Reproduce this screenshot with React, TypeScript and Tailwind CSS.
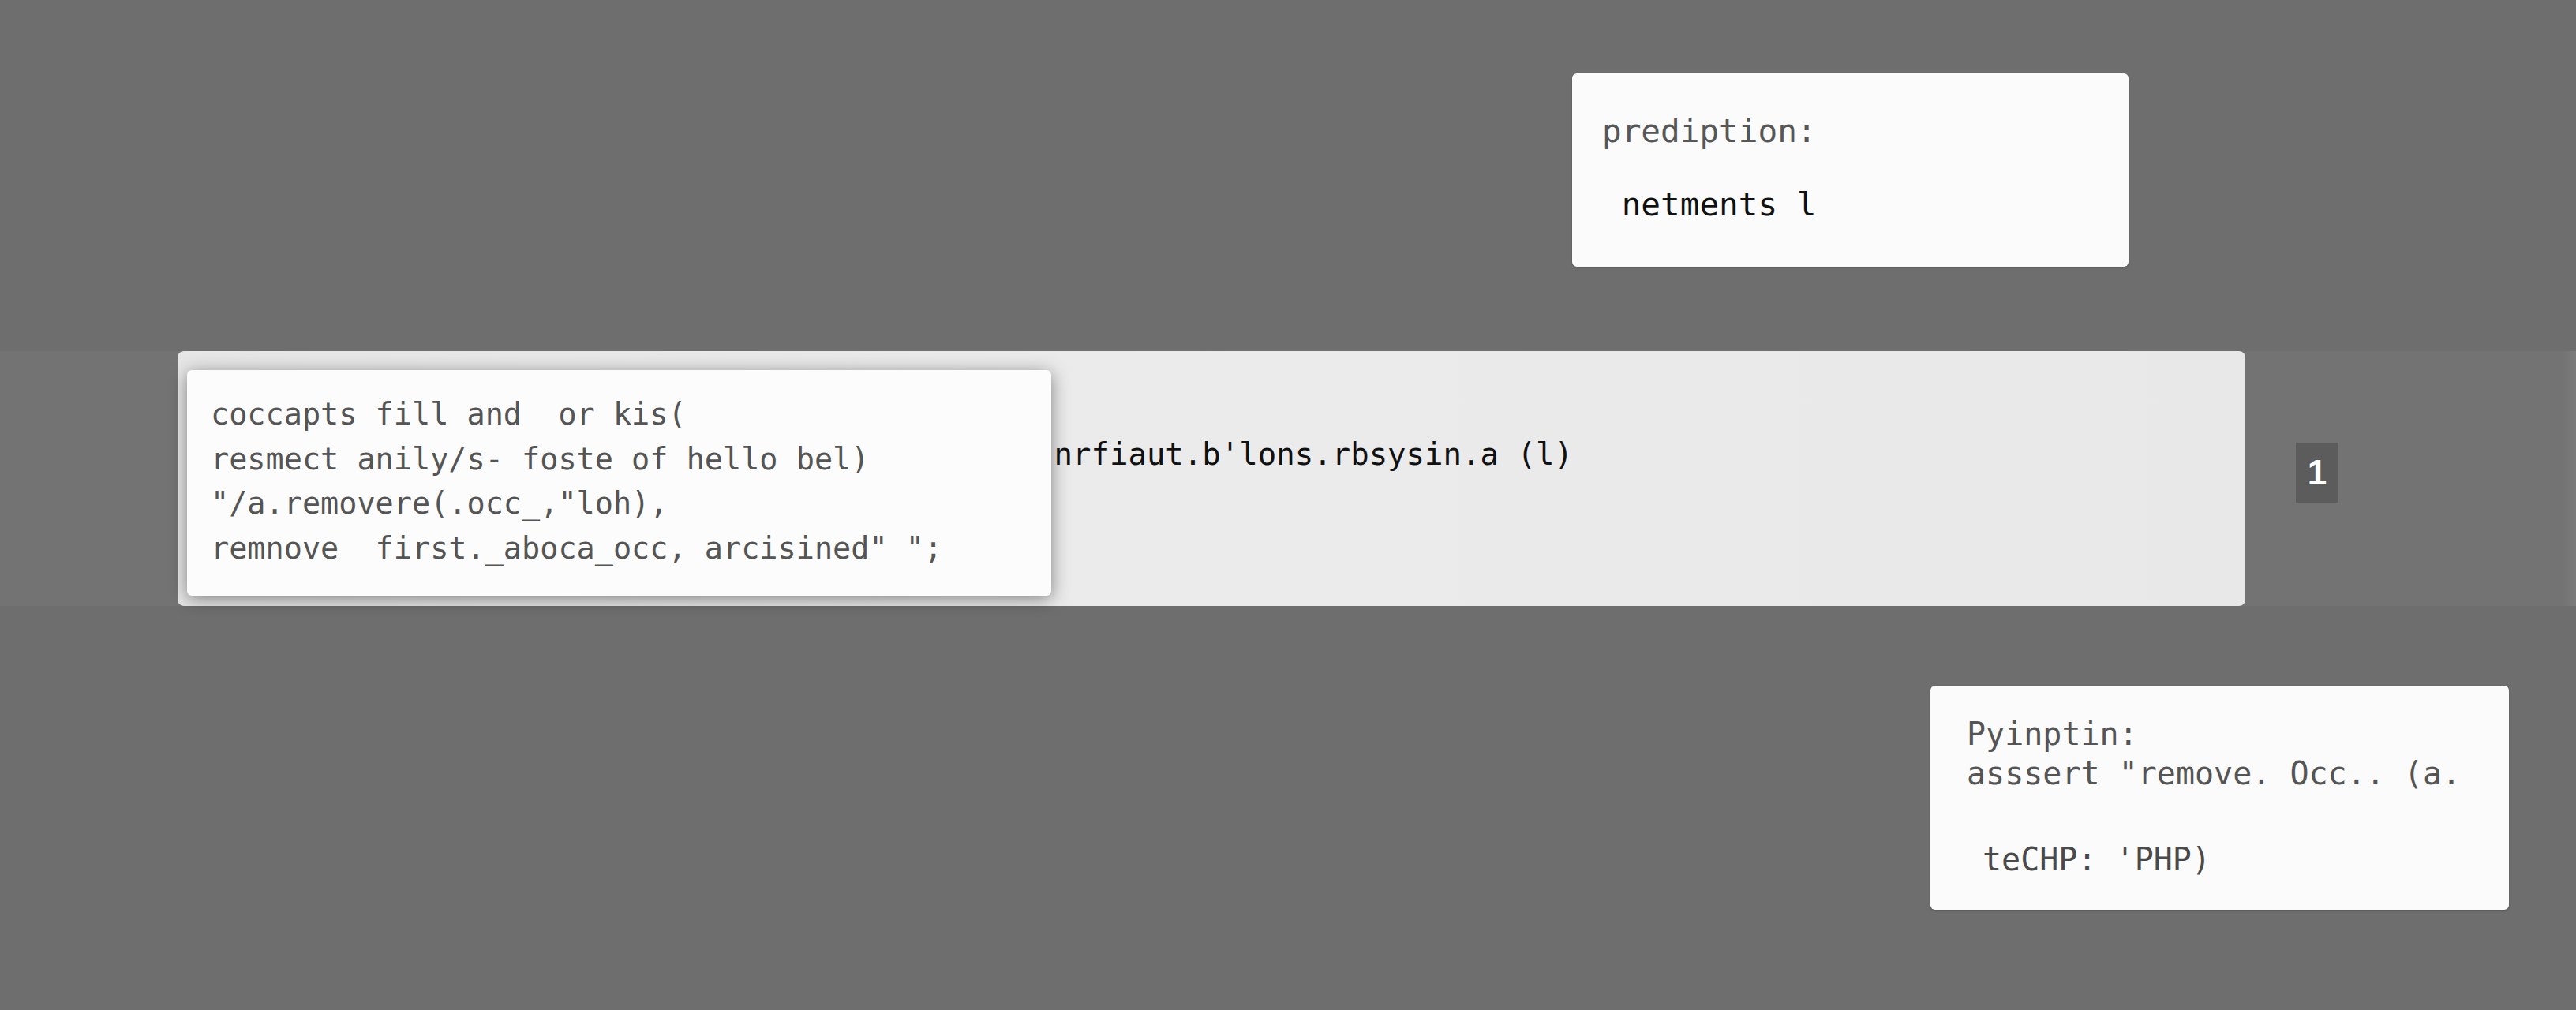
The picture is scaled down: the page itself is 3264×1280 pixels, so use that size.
const mono = "font-['DejaVu_Sans_Mono',monospace]";

function PredictionCard() {
  return (
    <div className={`ml-[1992px] mt-[93px] w-[705px] h-[245px] rounded-md bg-[#fbfbfb] shadow-[0_1px_3px_rgba(0,0,0,0.25)] pl-[38px] pt-[53px] ${mono}`}>
      <p className="text-[41px] leading-none text-[#575757] whitespace-pre">prediption:</p>
      <p className="mt-[52px] text-[41px] leading-none text-[#111] whitespace-pre"> netments l</p>
    </div>
  );
}

function CodeCard() {
  const lines = [
    "coccapts fill and  or kis(",
    "resmect anily/s- foste of hello bel)",
    "\"/a.removere(.occ_,\"loh),",
    "remnove  first._aboca_occ, arcisined\" \";",
  ];
  return (
    <div className={`absolute left-[12px] top-[24px] w-[1095px] h-[286px] rounded-md bg-[#fcfcfc] shadow-[0_4px_22px_rgba(0,0,0,0.45)] pl-[30px] pt-[28px] ${mono}`}>
      {lines.map((l) => (
        <p key={l} className="text-[38.5px] leading-[56.5px] text-[#555] whitespace-pre">
          {l}
        </p>
      ))}
    </div>
  );
}

function Band() {
  return (
    <div className="h-[323px] flex bg-[#737373]">
      <div className="relative ml-[225px] w-[2620px] h-full rounded-lg bg-gradient-to-r from-[#e6e6e6] via-[#ebebeb] to-[#e8e8e8] pl-[1087px] pt-[111px]">
        <p className={`text-[39px] leading-none text-[#111] whitespace-pre ${mono}`}>.nrfiaut.b'lons.rbsysin.a (l)</p>
        <CodeCard />
      </div>
      <div className="ml-[64px] mt-[116px] w-[54px] h-[76px] bg-[#5c5c5c] flex items-center justify-center">
        <span className="font-['Liberation_Sans',Arial,sans-serif] font-bold text-[44px] leading-none text-white">1</span>
      </div>
      <div className="flex-1" />
      <div className="w-[17px] h-full bg-gradient-to-r from-[#737373] to-[#7c7c7c]" />
    </div>
  );
}

function InputCard() {
  return (
    <div className={`ml-[2446px] mt-[101px] w-[733px] h-[284px] rounded-md bg-[#fbfbfb] shadow-[0_1px_3px_rgba(0,0,0,0.25)] pl-[46px] pt-[36px] ${mono}`}>
      <p className="text-[40px] leading-[50px] text-[#555] whitespace-pre">Pyinptin:</p>
      <p className="text-[40px] leading-[50px] text-[#555] whitespace-pre">asssert "remove. Occ.. (a.</p>
      <p className="mt-[59px] ml-[20px] text-[40px] leading-[50px] text-[#4a4a4a] whitespace-pre">teCHP: 'PHP)</p>
    </div>
  );
}

export default function App() {
  return (
    <div className="w-[3264px] h-[1280px] overflow-hidden bg-[#6e6e6e] flex flex-col">
      <div className="h-[445px]">
        <PredictionCard />
      </div>
      <Band />
      <InputCard />
    </div>
  );
}
